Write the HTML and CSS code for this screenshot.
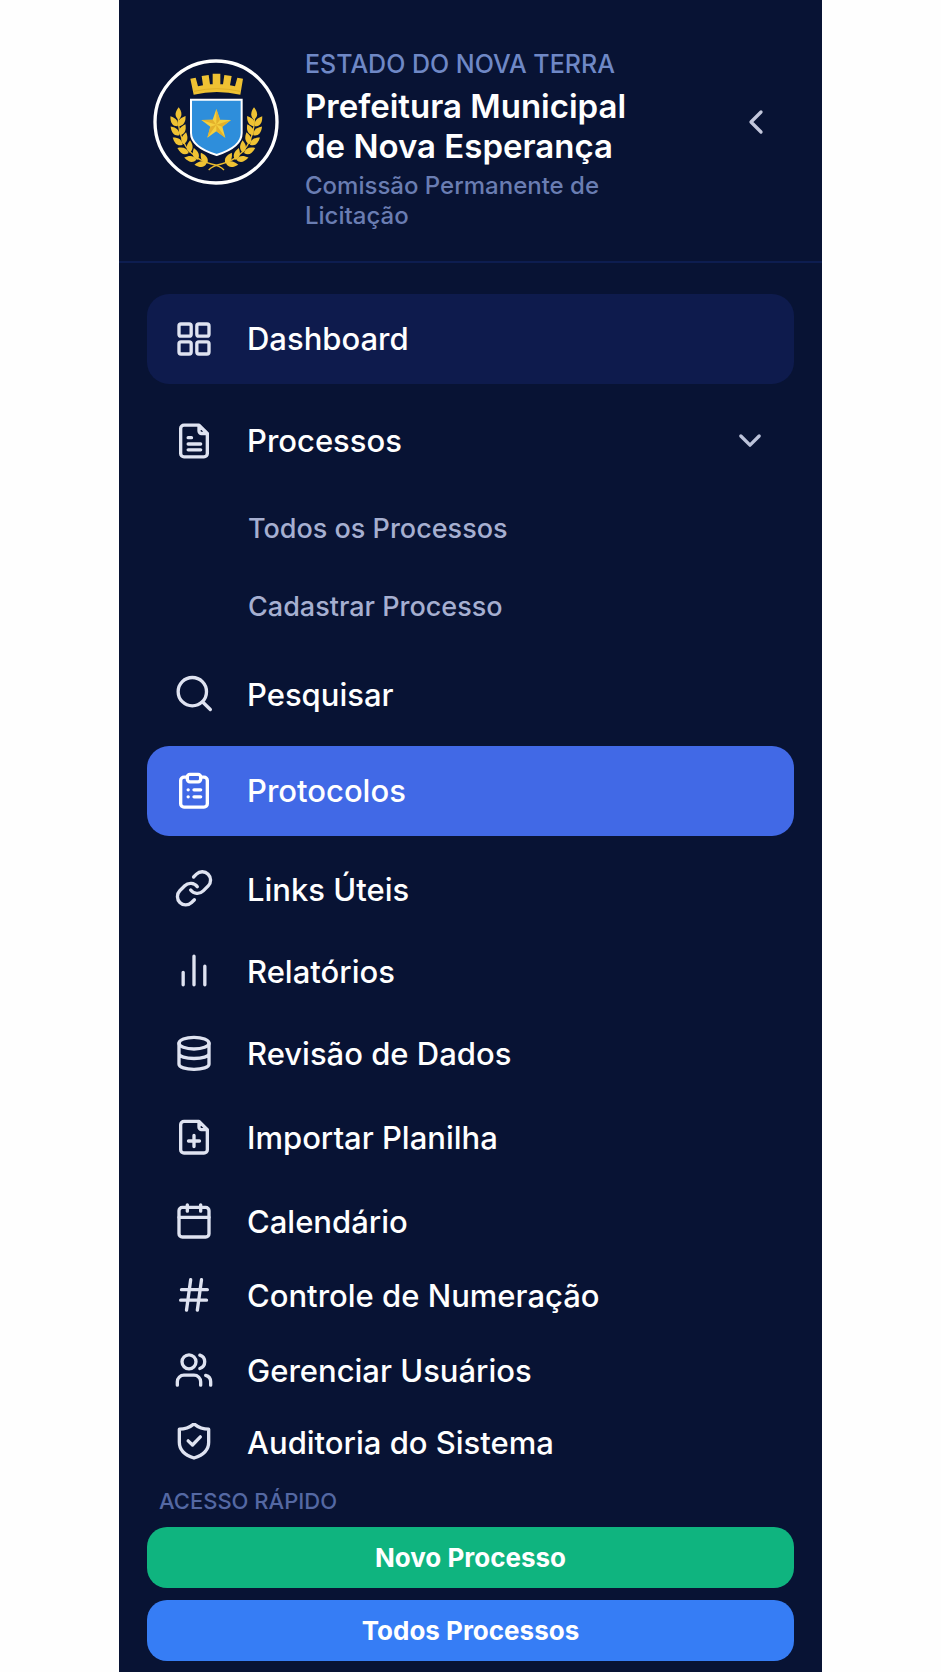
FILE: index.html
```html
<!DOCTYPE html>
<html lang="pt-BR">
<head>
<meta charset="utf-8">
<meta name="viewport" content="width=device-width, initial-scale=1">
<title>Prefeitura Municipal de Nova Esperança</title>
<link rel="stylesheet" href="styles.css">
</head>
<body>
<aside class="sidebar">
  <header class="brand">
    <svg class="crest" viewBox="37 40 378 378" role="img" aria-label="Brasão">
      <defs>
        <path id="leaf" d="M0 0C-12-8-13-20 0-37C11-22 11-9 0 0Z"/>
        <g id="branch">
          <path d="M250 373Q238 360 212 355Q165 345 136 303Q110 262 113 208" fill="none" stroke="#e9b92c" stroke-width="4"/>
          <use href="#leaf" transform="translate(114 222)"/>
          <use href="#leaf" transform="translate(111 242) rotate(-36)"/>
          <use href="#leaf" transform="translate(114 242) rotate(34)"/>
          <use href="#leaf" transform="translate(116 269) rotate(-45)"/>
          <use href="#leaf" transform="translate(118 269) rotate(26)"/>
          <use href="#leaf" transform="translate(126 297) rotate(-54)"/>
          <use href="#leaf" transform="translate(128 296) rotate(13)"/>
          <use href="#leaf" transform="translate(144 322) rotate(-66)"/>
          <use href="#leaf" transform="translate(147 321) rotate(2)"/>
          <use href="#leaf" transform="translate(167 342) rotate(-80)"/>
          <use href="#leaf" transform="translate(171 342) rotate(-18)"/>
          <use href="#leaf" transform="translate(198 353) rotate(-97)"/>
          <use href="#leaf" transform="translate(200 353) rotate(-32)"/>
        </g>
      </defs>
      <circle cx="226" cy="229" r="183" fill="#081334" stroke="#fff" stroke-width="10"/>
      <g fill="#efc233">
        <use href="#branch"/>
        <use href="#branch" transform="translate(454 0) scale(-1 1)"/>
        <path d="M149 99L165 96L172 122L187 119L183 91L204 88L208 116H216V84H239V116H247L251 88L273 91L268 119L283 122L290 96L307 99L299 147Q228 131 159 147Z"/>
      </g>
      <path d="M160 137Q228 121 298 137" fill="none" stroke="#d5a621" stroke-width="2"/>
      <path d="M151 162H303V262Q303 304 228 328Q151 304 151 262Z" fill="#2e8edb" stroke="#fff" stroke-width="6"/>
      <path d="M227 190L238 222L271 223L245 243L254 276L227 257L200 276L209 243L182 223L216 222Z" fill="#f4cf3e"/>
      <path d="M227 190V237L238 222ZM271 223L227 237L245 243ZM254 276L227 237V257ZM200 276L227 237L209 243ZM182 223L227 237L216 222Z" fill="#e3b02b"/>
    </svg>
    <div class="brand-text">
      <p class="state">ESTADO DO NOVA TERRA</p>
      <h1 class="title">Prefeitura Municipal de Nova Esperança</h1>
      <p class="department">Comissão Permanente de Licitação</p>
    </div>
    <button class="collapse" type="button" aria-label="Recolher menu">
      <svg class="icon" viewBox="0 0 24 24"><path d="M15 6l-6 6 6 6"/></svg>
    </button>
  </header>

  <nav class="menu" aria-label="Menu principal">
    <ul class="group group-main">
      <li><a class="item item-large item-current" href="#dashboard">
        <svg class="icon" viewBox="0 0 24 24"><rect x="3" y="3" width="7.300" height="7.300" rx="1.200"/><rect x="13.700" y="3" width="7.300" height="7.300" rx="1.200"/><rect x="3" y="13.700" width="7.300" height="7.300" rx="1.200"/><rect x="13.700" y="13.700" width="7.300" height="7.300" rx="1.200"/></svg>
        <span>Dashboard</span></a></li>
      <li><button class="item item-large" type="button" aria-expanded="true" aria-controls="processos">
        <svg class="icon" viewBox="0 0 24 24"><path d="M15 2.500H6a2 2 0 0 0-2 2v15a2 2 0 0 0 2 2h12a2 2 0 0 0 2-2v-12zM15 2.500v3.500a1.500 1.500 0 0 0 1.500 1.500H20M8.500 10h2M8.500 13.800h7.500M8.500 17.300h7.500"/></svg>
        <span>Processos</span>
        <svg class="icon chevron" viewBox="0 0 24 24"><path d="M6.500 9l5.500 5.500L17.500 9"/></svg></button></li>
    </ul>
    <ul class="submenu" id="processos">
      <li><a class="subitem" href="#todos">Todos os Processos</a></li>
      <li><a class="subitem" href="#cadastrar">Cadastrar Processo</a></li>
    </ul>
    <ul class="group group-tight">
      <li><a class="item item-large" href="#pesquisar">
        <svg class="icon" viewBox="0 0 24 24"><circle cx="11" cy="10" r="8.500"/><path d="M17.200 16.200L21.800 20.700"/></svg>
        <span>Pesquisar</span></a></li>
      <li><a class="item item-large item-selected" href="#protocolos" aria-current="page">
        <svg class="icon" viewBox="0 0 24 24"><path d="M16 3.700h2a2 2 0 0 1 2 2v14a2 2 0 0 1-2 2H6a2 2 0 0 1-2-2v-14a2 2 0 0 1 2-2h2"/><rect x="8" y="2" width="8" height="4.500" rx="1.500"/><path d="M8.500 11.300h.01M12 11.300h4M8.500 15.500h.01M12 15.500h4"/></svg>
        <span>Protocolos</span></a></li>
    </ul>
    <ul class="group group-tools">
      <li><a class="item" href="#links">
        <svg class="icon" viewBox="0 0 24 24"><g transform="translate(0 -1)"><path d="M10 13a5 5 0 0 0 7.540.540l3-3a5 5 0 0 0-7.070-7.070l-1.720 1.710"/><path d="M14 11a5 5 0 0 0-7.540-.540l-3 3a5 5 0 0 0 7.070 7.070l1.710-1.710"/></g></svg>
        <span>Links Úteis</span></a></li>
      <li><a class="item" href="#relatorios">
        <svg class="icon" viewBox="0 0 24 24"><path d="M5.500 19.700v-7.500M12 19.700V2.500M18.500 19.700V8.500"/></svg>
        <span>Relatórios</span></a></li>
      <li><a class="item" href="#revisao">
        <svg class="icon" viewBox="0 0 24 24"><ellipse cx="12" cy="5.500" rx="9" ry="3.500"/><path d="M3 5.500v12.700c0 1.800 4 3 9 3s9-1.200 9-3v-12.700M3 11.700c0 1.800 4 3 9 3s9-1.200 9-3"/></svg>
        <span>Revisão de Dados</span></a></li>
    </ul>
    <ul class="group group-data">
      <li><a class="item" href="#importar">
        <svg class="icon" viewBox="0 0 24 24"><path d="M15 2H6a2 2 0 0 0-2 2v15a2 2 0 0 0 2 2h12a2 2 0 0 0 2-2V7zM15 2v3.500a1.500 1.500 0 0 0 1.500 1.500H20M12 10.500v6.600M8.700 13.800h6.600"/></svg>
        <span>Importar Planilha</span></a></li>
      <li><a class="item" href="#calendario">
        <svg class="icon" viewBox="0 0 24 24"><rect x="3" y="3.200" width="18" height="17.800" rx="2"/><path d="M8 1.700v3.800M16 1.700v3.800M3 9.200h18"/></svg>
        <span>Calendário</span></a></li>
    </ul>
    <ul class="group group-admin">
      <li><a class="item" href="#numeracao">
        <svg class="icon" viewBox="0 0 24 24"><path d="M4.500 8.200h15.500M4 14.500h15.500M10 2.200L7.500 20.500M16.500 2.200L14 20.500"/></svg>
        <span>Controle de Numeração</span></a></li>
      <li><a class="item" href="#usuarios">
        <svg class="icon" viewBox="0 0 24 24"><circle cx="9" cy="6.500" r="4.200"/><path d="M2 20.500v-2a4 4 0 0 1 4-4h6a4 4 0 0 1 4 4v2M15.500 2.500a4.200 4.200 0 0 1 0 8M22 20.500v-2a4 4 0 0 0-3-3.870"/></svg>
        <span>Gerenciar Usuários</span></a></li>
    </ul>
    <ul class="group group-audit">
      <li><a class="item" href="#auditoria">
        <svg class="icon" viewBox="0 0 24 24"><g transform="translate(0 -1.500)"><path d="M12 22.500c-5-1.600-8.800-4.500-8.800-9.500V5.200c3.300 0 6.100-1 8.800-3.200c2.700 2.200 5.500 3.200 8.800 3.200v7.800c0 5-3.800 7.900-8.800 9.500z"/><path d="M8.500 12.200l2.600 2.500 4.700-4.900"/></g></svg>
        <span>Auditoria do Sistema</span></a></li>
    </ul>
  </nav>

  <section class="quick" aria-labelledby="quick-title">
    <h2 class="quick-title" id="quick-title">ACESSO RÁPIDO</h2>
    <button class="action action-new" type="button">Novo Processo</button>
    <button class="action action-all" type="button">Todos Processos</button>
  </section>
</aside>
</body>
</html>
```

FILE: styles.css
```css
* {
  box-sizing: border-box;
}

body {
  margin: 0;
  background: #fefefe;
  font-family: Inter, "Liberation Sans", sans-serif;
  color: #fff;
}

h1, h2, p, ul {
  margin: 0;
  padding: 0;
}

ul {
  list-style: none;
}

button {
  border: 0;
  background: none;
  color: inherit;
  font: inherit;
  cursor: pointer;
}

a {
  color: inherit;
  text-decoration: none;
}

.sidebar {
  display: flex;
  flex-direction: column;
  max-width: 703px;
  min-height: 100vh;
  margin: 0 auto;
  background: #081334;
}

.brand {
  display: flex;
  align-items: flex-start;
  padding: 49px 46px 30px 34px;
  border-bottom: 2px solid #0d1d50;
}

.crest {
  flex: none;
  width: 126px;
  height: 126px;
  margin-top: 10px;
}

.brand-text {
  flex: 1;
  max-width: 340px;
  margin-left: 26px;
}

.state {
  font-size: 25px;
  font-weight: 500;
  line-height: 30px;
  color: #6f88c6;
}

.title {
  margin: 7px 0 5px;
  font-size: 33px;
  font-weight: 600;
  line-height: 40px;
}

.department {
  font-size: 24px;
  font-weight: 500;
  line-height: 30px;
  color: #6a7db2;
}

.collapse {
  width: 40px;
  height: 40px;
  margin: 53px 0 0 auto;
  padding: 0;
  color: #c3c7dc;
}

.icon {
  display: block;
  flex: none;
  width: 40px;
  height: 40px;
  fill: none;
  stroke: currentColor;
  stroke-width: 2;
  stroke-linecap: round;
  stroke-linejoin: round;
}

.menu {
  padding: 31px 28px 0;
}

.group {
  display: flex;
  flex-direction: column;
}

.group-main {
  gap: 12px;
}

.submenu {
  padding: 4px 0;
}

.group-tight {
  gap: 6px;
}

.group-tools {
  gap: 12px;
  margin-top: 19px;
}

.group-data {
  gap: 14px;
  margin-top: 14px;
}

.group-admin {
  gap: 5px;
  margin-top: 4px;
}

.group-audit {
  margin-top: 2px;
}

.item {
  display: flex;
  align-items: center;
  gap: 33px;
  width: 100%;
  min-height: 70px;
  padding: 0 24px 0 27px;
  border-radius: 22px;
  font-size: 31px;
  font-weight: 500;
  line-height: 40px;
  text-align: left;
}

.item .icon {
  color: #dfe3f1;
}

.item-large {
  min-height: 90px;
}

.item-current {
  background: #0e1b4d;
}

.item-selected {
  background: #4169e6;
}

.item-selected .icon {
  color: #fff;
}

.item .chevron {
  margin-left: auto;
  color: #bcc3da;
}

.subitem {
  display: flex;
  align-items: center;
  min-height: 78px;
  padding-left: 101px;
  font-size: 27px;
  font-weight: 500;
  line-height: 36px;
  color: #a6afd0;
}

.quick {
  display: flex;
  flex-direction: column;
  gap: 12px;
  padding: 9px 28px 11px;
}

.quick-title {
  padding-left: 12px;
  font-size: 22px;
  font-weight: 500;
  line-height: 28px;
  color: #5468a3;
}

.action {
  min-height: 61px;
  border-radius: 20px;
  font-size: 26px;
  font-weight: 700;
  line-height: 32px;
}

.action-new {
  background: #0fb47f;
}

.action-all {
  background: #367df5;
}
```
